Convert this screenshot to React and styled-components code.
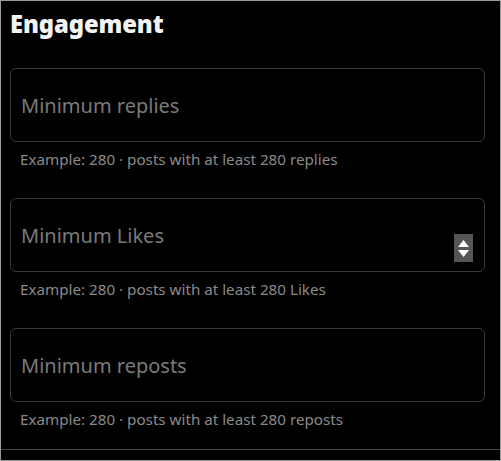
import React from "react";
import styled, { createGlobalStyle } from "styled-components";

const Global = createGlobalStyle`
    html, body {
        margin: 0;
        padding: 0;
        background: #000;
    }
`

const Frame = styled.div`
    width: 501px;
    height: 461px;
    box-sizing: border-box;
    border: 1px solid #9a9a9a;
    background: #000;
    display: flex;
    flex-direction: column;
    font-family: "Noto Sans", "Open Sans", sans-serif;
    overflow: hidden;
`

const Section = styled.section`
    padding: 0 15px 20px 9px;
    border-bottom: 1px solid #444;
`

const Title = styled.h2`
    margin: 0;
    padding-top: 8px;
    height: 67px;
    box-sizing: border-box;
    font-size: 23.8px;
    font-weight: 900;
    color: #f2f2f2;
    line-height: 30px;
    letter-spacing: -0.1px;
`

const Field = styled.div`
    margin-bottom: 29px;

    &:last-child {
        margin-bottom: 0;
    }
`

const Box = styled.div`
    height: 74px;
    box-sizing: border-box;
    border: 1px solid #393939;
    border-radius: 6px;
    display: flex;
    align-items: center;
    padding: 0 11px 0 10px;
`

const Input = styled.input`
    flex: 1;
    min-width: 0;
    background: transparent;
    border: none;
    outline: none;
    font-family: inherit;
    font-size: 20px;
    color: #ddd;
    padding: 0;

    &::placeholder {
        color: #7a7a7a;
    }
`

const Spinner = styled.div`
    width: 19px;
    height: 28px;
    background: #555;
    display: flex;
    flex-direction: column;
    align-items: center;
    justify-content: center;
    gap: 3px;
    margin-top: 26px;
`

const Help = styled.p`
    margin: 7px 0 0 10px;
    font-size: 15.2px;
    line-height: 20px;
    color: #8a8a8a;
`

const fields = [
    {label: "Minimum replies", noun: "replies"},
    {label: "Minimum Likes", noun: "Likes", spin: true},
    {label: "Minimum reposts", noun: "reposts"},
]

export default function App() {
    return (
        <Frame>
            <Global />
            <Section>
                <Title>Engagement</Title>

                {fields.map(f => (
                    <Field key={f.noun}>
                        <Box>
                            <Input type="text" placeholder={f.label} />
                            {f.spin && (
                                <Spinner>
                                    <svg width="11" height="7" viewBox="0 0 11 7">
                                        <path d="M5.5 0 L11 7 L0 7 Z" fill="#fff" />
                                    </svg>
                                    <svg width="11" height="7" viewBox="0 0 11 7">
                                        <path d="M0 0 L11 0 L5.5 7 Z" fill="#fff" />
                                    </svg>
                                </Spinner>
                            )}
                        </Box>
                        <Help>Example: 280 · posts with at least 280 {f.noun}</Help>
                    </Field>
                ))}
            </Section>
        </Frame>
    )
}
